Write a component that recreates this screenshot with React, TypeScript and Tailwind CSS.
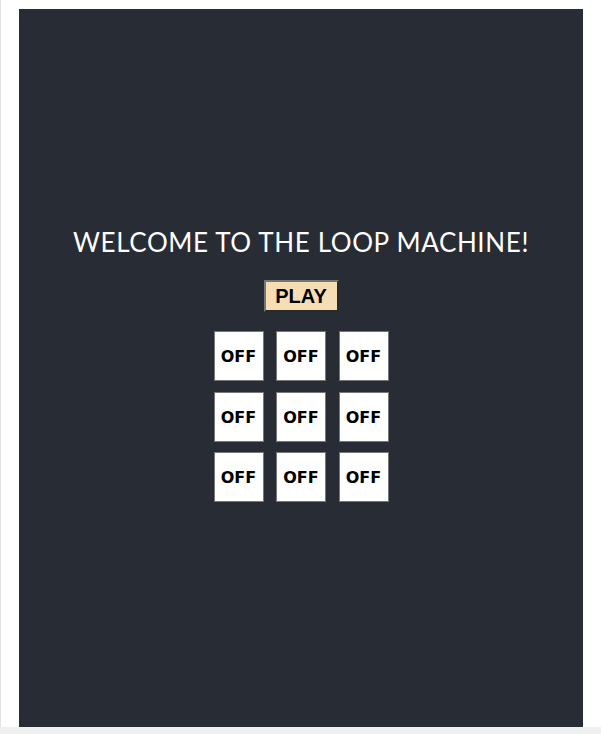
import { useState } from "react";

const pads = Array.from({ length: 9 }, (_, i) => i);

const App = () => {
  const [on, setOn] = useState<boolean[]>(Array(9).fill(false));
  const [playing, setPlaying] = useState(false);

  const toggle = (i: number) => {
    setOn((prev) => prev.map((v, j) => (j === i ? !v : v)));
  };

  return (
    <div className="h-[734px] w-full flex flex-col bg-white">
      <div className="flex-1 flex border-l border-[#e3e3e3] pt-[9px] pl-[18px] pr-[18px]">
        <div className="flex-1 bg-[#282c34] flex flex-col items-center justify-center pb-[10px]">
          <h1
            className="text-white text-[26px] font-normal leading-[36px] tracking-[0.62px]"
            style={{ fontFamily: "Lato, 'Noto Sans', sans-serif" }}
          >
            WELCOME TO THE LOOP MACHINE!
          </h1>
          <button
            onClick={() => setPlaying(!playing)}
            className="mt-[20px] w-[75px] h-[32px] bg-[#f5deb3] border-2 border-t-[#767676] border-l-[#767676] border-r-[#2a2a2a] border-b-[#2a2a2a] text-black text-[20px] font-bold leading-none"
            style={{ fontFamily: "'Liberation Sans', Arial, sans-serif" }}
          >
            {playing ? "STOP" : "PLAY"}
          </button>
          <div className="mt-[19px] grid grid-cols-3 gap-x-[12.5px] gap-y-[10.5px]">
            {pads.map((i) => (
              <button
                key={i}
                onClick={() => toggle(i)}
                className="w-[50px] h-[50px] pt-[2px] bg-white border border-[#777] text-black text-[16px] font-bold"
                style={{ fontFamily: "'DejaVu Sans', sans-serif" }}
              >
                {on[i] ? "ON" : "OFF"}
              </button>
            ))}
          </div>
        </div>
      </div>
      <div className="h-[7px] bg-[#f0f0f0]" />
    </div>
  );
};

export default App;
